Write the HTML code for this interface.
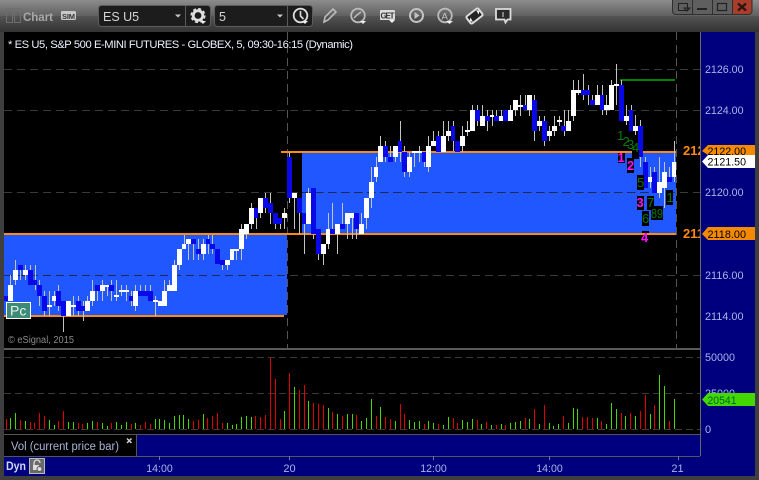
<!DOCTYPE html>
<html><head><meta charset="utf-8"><style>
html,body{margin:0;padding:0;background:#3c3c3c;width:759px;height:480px;overflow:hidden}
svg{display:block;position:absolute;left:0;top:0}
text{font-family:"Liberation Sans",sans-serif}
.ax{font-size:11px;fill:#aab4e6}
.tg{font-size:11px;fill:#000}
.g{font-size:13px;fill:#0a7a0a}
.m{font-size:13px;fill:#ff10ff;font-weight:bold}
</style></head><body>
<svg width="759" height="480" viewBox="0 0 759 480">
<defs>
<linearGradient id="t1" x1="0" y1="0" x2="0" y2="1"><stop offset="0" stop-color="#8c8c8c"/><stop offset="1" stop-color="#606060"/></linearGradient>
<linearGradient id="t2" x1="0" y1="0" x2="0" y2="1"><stop offset="0" stop-color="#545454"/><stop offset="1" stop-color="#333"/></linearGradient>
</defs>
<rect width="759" height="480" fill="#3e3e3e"/>
<rect width="759" height="16" fill="url(#t1)"/>
<rect y="16" width="759" height="16" fill="url(#t2)"/>
<!-- main black -->
<rect x="4" y="32" width="696" height="316" fill="#000"/>
<rect x="4" y="350" width="696" height="84" fill="#000"/>
<!-- bands -->
<rect x="4" y="235" width="283" height="80" fill="#2157ff"/>
<rect x="302" y="153" width="374" height="80" fill="#2157ff"/>
<!-- grid -->
<path d="M4 69.5H700M4 110.5H700M4 192.5H700M4 275.5H700" stroke="#3a3a3a" stroke-dasharray="8 5" fill="none"/>
<path d="M4 275.5H287M302 192.5H676" stroke="#1f2a50" stroke-dasharray="8 5" fill="none"/>
<path d="M287.5 32V348M676.5 32V348" stroke="#555" stroke-dasharray="8 5" fill="none"/>
<path d="M4 357.5H700M4 393.5H700M4 429.5H700" stroke="#3a3a3a" stroke-dasharray="7 4" fill="none"/>
<!-- orange lines -->
<rect x="4" y="315" width="280" height="2" fill="#ff8a10"/>
<rect x="4" y="233" width="672" height="2" fill="#ff8a10"/>
<rect x="281" y="151" width="395" height="2" fill="#ff8a10"/>
<rect x="620" y="79" width="55" height="2" fill="#008000"/>
<!-- wicks -->
<path stroke="#c4c4c4" fill="none" d="M10.5 275V301M15.5 260V285M20.5 265V280M25.5 265V280M30.5 265V285M35.5 265V290M39.5 280V306M44.5 291V316M49.5 291V316M54.5 291V306M58.5 285V311M63.5 301V332M68.5 301V316M73.5 296V316M78.5 296V316M83.5 301V321M87.5 296V311M92.5 280V306M97.5 285V301M102.5 280V301M107.5 285V296M111.5 280V301M116.5 280V301M121.5 285V296M126.5 285V301M131.5 291V306M135.5 285V311M140.5 285V296M145.5 285V296M150.5 285V301M155.5 296V316M160.5 301V306M164.5 280V306M169.5 280V291M174.5 260V291M179.5 249V270M184.5 235V249M188.5 239V260M193.5 239V260M198.5 239V260M203.5 239V260M208.5 235V254M212.5 235V254M217.5 249V264M222.5 260V270M227.5 260V270M232.5 249V260M236.5 249V260M241.5 224V260M246.5 224V239M251.5 203V229M256.5 208V229M260.5 198V218M265.5 193V213M270.5 193V224M275.5 213V229M280.5 218V229M284.5 208V229M289.5 152V203M294.5 198V229M299.5 198V234M304.5 224V254M308.5 188V224M313.5 188V239M318.5 229V260M323.5 244V265M328.5 213V249M332.5 203V234M337.5 224V254M342.5 203V229M347.5 224V239M352.5 218V239M356.5 213V239M361.5 213V234M366.5 218V229M371.5 167V208M376.5 157V182M380.5 136V162M385.5 141V162M390.5 146V162M395.5 146V162M400.5 121V162M404.5 146V177M409.5 152V177M414.5 152V167M419.5 146V162M424.5 152V167M428.5 136V172M433.5 131V146M438.5 131V152M443.5 121V152M448.5 121V141M453.5 121V151M457.5 141V152M462.5 126V152M467.5 121V136M472.5 105V131M477.5 105V126M482.5 105V126M487.5 110V131M492.5 110V126M496.5 110V121M501.5 110V121M505.5 110V121M510.5 105V121M515.5 100V116M520.5 95V116M525.5 95V110M529.5 95V116M534.5 95V141M539.5 116V131M544.5 116V146M549.5 126V141M554.5 116V136M559.5 116V126M564.5 110V136M568.5 110V131M573.5 80V121M578.5 80V95M583.5 74V100M588.5 85V105M592.5 95V105M597.5 85V105M602.5 85V115M606.5 95V115M611.5 80V110M616.5 64V105M621.5 80V121M626.5 105V125M631.5 105V131M635.5 115V135M640.5 120V167M645.5 157V188M650.5 167V188M654.5 167V193M659.5 157V198M664.5 162V208M669.5 167V182M674.5 141V182"/>
<!-- white bodies -->
<path fill="#fff" d="M8 285h5v16h-5zM13 270h5v10h-5zM23 270h5v5h-5zM47 305h5v2h-5zM52 296h4v5h-4zM66 301h5v15h-5zM71 305h5v2h-5zM85 301h5v10h-5zM90 291h5v10h-5zM100 285h5v6h-5zM105 285h4v2h-4zM114 295h5v2h-5zM119 290h5v2h-5zM124 290h5v2h-5zM133 291h5v15h-5zM153 300h5v2h-5zM158 301h4v5h-4zM162 291h5v15h-5zM167 285h5v6h-5zM172 265h5v26h-5zM177 249h5v16h-5zM182 244h4v5h-4zM186 239h5v5h-5zM201 244h5v10h-5zM225 260h5v5h-5zM230 249h4v11h-4zM234 249h5v2h-5zM239 229h5v20h-5zM244 224h5v10h-5zM249 208h5v16h-5zM258 198h5v15h-5zM282 213h5v5h-5zM292 193h5v5h-5zM306 193h5v31h-5zM321 244h5v10h-5zM326 229h4v15h-4zM335 224h5v10h-5zM345 213h5v11h-5zM350 213h4v5h-4zM359 224h5v10h-5zM364 198h5v20h-5zM369 182h5v16h-5zM374 167h4v10h-4zM378 146h5v16h-5zM393 146h5v11h-5zM407 157h5v15h-5zM412 151h5v2h-5zM417 151h5v2h-5zM426 146h5v21h-5zM431 141h5v5h-5zM441 136h5v16h-5zM446 131h5v5h-5zM460 136h5v10h-5zM465 130h5v2h-5zM470 110h5v21h-5zM480 116h5v10h-5zM490 115h4v2h-4zM499 116h4v5h-4zM508 110h5v11h-5zM513 100h5v10h-5zM518 105h5v2h-5zM527 95h5v15h-5zM537 121h5v5h-5zM547 131h5v5h-5zM552 126h5v5h-5zM557 120h5v2h-5zM566 121h5v10h-5zM571 90h5v26h-5zM576 90h5v3h-5zM595 95h5v10h-5zM604 105h5v5h-5zM609 85h5v25h-5zM614 84h5v2h-5zM624 116h5v5h-5zM633 126h5v5h-5zM648 177h4v5h-4zM657 182h5v11h-5zM662 172h5v16h-5zM672 162h4v15h-4z"/>
<!-- blue bodies -->
<path fill="#0808e8" d="M4 296h4v5h-4zM18 265h5v5h-5zM28 270h5v15h-5zM33 280h4v5h-4zM37 285h5v11h-5zM42 296h5v15h-5zM56 291h5v15h-5zM61 301h5v15h-5zM76 301h5v10h-5zM81 306h4v5h-4zM95 285h5v6h-5zM109 285h5v6h-5zM129 296h4v5h-4zM138 291h5v5h-5zM143 291h5v5h-5zM148 291h5v10h-5zM191 239h5v5h-5zM196 249h5v5h-5zM206 239h4v5h-4zM210 244h5v5h-5zM215 249h5v15h-5zM220 260h5v5h-5zM254 208h4v10h-4zM263 198h5v10h-5zM268 203h5v10h-5zM273 213h5v11h-5zM278 218h4v6h-4zM287 157h5v41h-5zM297 198h5v15h-5zM302 213h4v11h-4zM311 188h5v46h-5zM316 229h5v25h-5zM330 229h5v5h-5zM340 224h5v5h-5zM354 213h5v16h-5zM383 146h5v11h-5zM388 157h5v5h-5zM398 141h4v11h-4zM402 152h5v20h-5zM422 152h4v10h-4zM436 136h5v16h-5zM451 126h4v15h-4zM455 141h5v11h-5zM475 110h5v11h-5zM485 116h5v5h-5zM494 116h5v5h-5zM503 110h5v11h-5zM523 105h4v5h-4zM532 100h5v31h-5zM542 121h5v20h-5zM561 126h5v5h-5zM581 90h5v5h-5zM586 90h4v5h-4zM590 100h5v5h-5zM600 95h4v15h-4zM619 85h5v36h-5zM629 110h4v21h-4zM638 126h5v31h-5zM643 162h5v26h-5zM652 172h5v21h-5zM667 177h5v5h-5z"/>
<!-- count labels -->
<g fill="#000">
<rect x="618" y="153" width="7" height="10"/><rect x="627" y="158" width="7" height="15"/><rect x="637" y="175" width="7" height="15"/><rect x="637" y="196" width="7" height="14"/><rect x="647" y="196" width="7" height="14"/><rect x="642" y="211" width="7" height="15"/><rect x="651" y="206" width="12" height="14"/><rect x="666" y="190" width="7" height="15"/><rect x="642" y="231" width="7" height="2"/><rect x="632" y="149" width="7" height="10"/>
</g>
<text class="g" x="617" y="140">1</text><text class="g" x="622.5" y="146">2</text><text class="g" x="627" y="149">3</text><text class="g" x="632" y="152">4</text>
<text class="m" x="617.5" y="162">1</text><text class="m" x="627" y="170">2</text>
<text class="g" x="637" y="187">5</text><text class="m" x="636.5" y="207">3</text><text class="g" x="647" y="207">7</text><text class="g" x="642" y="223">6</text><text class="g" x="651" y="218" textLength="12" lengthAdjust="spacingAndGlyphs">89</text><text class="g" x="666.5" y="202">1</text><text class="m" x="641" y="242">4</text>
<text font-size="13" font-weight="bold" fill="#ff8a10" x="683" y="155">2122.00</text>
<text font-size="13" font-weight="bold" fill="#ff8a10" x="683" y="238">2118.00</text>
<!-- pc -->
<rect x="6.5" y="302.5" width="24" height="16" fill="#3e8a78" stroke="#fff"/>
<text x="10" y="315.500" font-size="14" fill="#e8f4e8">Pc</text>
<text x="8" y="343" font-size="10" fill="#8a8a8a" textLength="66" lengthAdjust="spacingAndGlyphs">© eSignal, 2015</text>
<text x="8" y="48" font-size="11.2" fill="#eaf2ff" textLength="345">* ES U5, S&amp;P 500 E-MINI FUTURES - GLOBEX, 5, 09:30-16:15 (Dynamic)</text>
<!-- volume -->
<path stroke="#e00000" fill="none" d="M6.5 419V429M20.5 420V429M30.5 422V429M34.5 423V429M39.5 413V429M44.5 416V429M58.5 421V429M63.5 411V429M78.5 423V429M82.5 424V429M97.5 422V429M111.5 423V429M131.5 424V429M140.5 425V429M145.5 422V429M150.5 424V429M193.5 421V429M198.5 420V429M207.5 418V429M212.5 416V429M217.5 413V429M222.5 423V429M255.5 416V429M260.5 417V429M265.5 415V429M270.5 358V429M275.5 379V429M280.5 419V429M289.5 373V429M299.5 390V429M304.5 385V429M313.5 403V429M318.5 404V429M323.5 405V429M332.5 412V429M342.5 416V429M356.5 415V429M376.5 416V429M385.5 417V429M390.5 419V429M400.5 404V429M404.5 414V429M424.5 424V429M438.5 424V429M453.5 418V429M457.5 423V429M477.5 420V429M486.5 422V429M496.5 425V429M505.5 425V429M525.5 418V429M534.5 409V429M544.5 405V429M563.5 416V429M582.5 417V429M587.5 417V429M592.5 418V429M601.5 421V429M621.5 413V429M630.5 413V429M640.5 411V429M645.5 395V429M654.5 405V429M669.5 421V429"/>
<path stroke="#42d800" fill="none" d="M10.5 418V429M15.5 413V429M25.5 421V429M49.5 420V429M54.5 425V429M68.5 422V429M73.5 422V429M87.5 423V429M92.5 421V429M102.5 423V429M107.5 426V429M116.5 422V429M121.5 425V429M126.5 422V429M135.5 423V429M155.5 419V429M159.5 419V429M164.5 420V429M169.5 423V429M174.5 416V429M179.5 415V429M183.5 415V429M188.5 419V429M203.5 414V429M227.5 423V429M232.5 425V429M236.5 424V429M241.5 417V429M246.5 416V429M251.5 417V429M284.5 411V429M294.5 387V429M308.5 401V429M328.5 408V429M337.5 414V429M347.5 414V429M352.5 414V429M361.5 421V429M366.5 418V429M371.5 399V429M380.5 407V429M395.5 421V429M409.5 420V429M414.5 422V429M419.5 421V429M428.5 421V429M433.5 423V429M443.5 425V429M448.5 417V429M462.5 420V429M467.5 422V429M472.5 419V429M481.5 424V429M491.5 425V429M501.5 424V429M510.5 423V429M515.5 422V429M520.5 421V429M529.5 419V429M539.5 424V429M549.5 423V429M553.5 426V429M558.5 424V429M568.5 423V429M573.5 408V429M577.5 409V429M597.5 418V429M606.5 424V429M611.5 403V429M616.5 409V429M625.5 416V429M635.5 416V429M650.5 414V429M659.5 375V429M664.5 386V429M674.5 399V429"/>
<!-- panel dividers -->
<rect x="4" y="348" width="696" height="2" fill="#5a5a5a"/>
<path d="M287.5 345V348M676.5 345V348" stroke="#555"/>
<!-- vol legend row -->
<rect x="4" y="434" width="696" height="1" fill="#555"/>
<rect x="4" y="435" width="132" height="21" fill="#000"/>
<rect x="136" y="434" width="564" height="22" fill="#00007f"/>
<rect x="136" y="434" width="1" height="22" fill="#555"/>
<rect x="136" y="434" width="564" height="1" fill="#555"/>
<text x="11" y="450" font-size="11.5" fill="#aab4d8" textLength="108" lengthAdjust="spacingAndGlyphs">Vol (current price bar)</text>
<path d="M127 438.500l4.500 4.500M131.500 438.500l-4.500 4.500" stroke="#d0d0d0" stroke-width="1.500"/>
<!-- time axis -->
<rect x="4" y="456" width="751" height="20" fill="#00007f"/>
<rect x="4" y="456" width="696" height="1" fill="#555"/>
<path d="M159.5 456V460M289.5 456V460M433.5 456V460M549.5 456V460M678.5 456V460" stroke="#7078b0"/>
<text x="6" y="470" font-size="12" font-weight="bold" fill="#d0d8f8" textLength="20" lengthAdjust="spacingAndGlyphs">Dyn</text>
<rect x="29.5" y="458.5" width="15" height="15" fill="#6a6a6a" stroke="#bbb"/>
<path d="M34 465v-2a3 3 0 0 1 6 0" fill="none" stroke="#ddd" stroke-width="1.3"/><rect x="33" y="465" width="6" height="5" fill="#ddd"/><circle cx="39.5" cy="469" r="2.5" fill="#ddd" stroke="#555"/>
<g text-anchor="middle">
<text class="ax" x="159.5" y="472" textLength="26.500" lengthAdjust="spacingAndGlyphs">14:00</text><text class="ax" x="289.5" y="472">20</text><text class="ax" x="433.5" y="472" textLength="26.500" lengthAdjust="spacingAndGlyphs">12:00</text><text class="ax" x="549.5" y="472" textLength="26.500" lengthAdjust="spacingAndGlyphs">14:00</text><text class="ax" x="677.5" y="472">21</text>
</g>
<!-- price axis -->
<rect x="701" y="32" width="54" height="444" fill="#00007f"/>
<rect x="700" y="32" width="1" height="424" fill="#666"/>
<g>
<text class="ax" x="705" y="73" textLength="38.500" lengthAdjust="spacingAndGlyphs">2126.00</text><text class="ax" x="705" y="114" textLength="38.500" lengthAdjust="spacingAndGlyphs">2124.00</text><text class="ax" x="705" y="196" textLength="38.500" lengthAdjust="spacingAndGlyphs">2120.00</text><text class="ax" x="705" y="279" textLength="38.500" lengthAdjust="spacingAndGlyphs">2116.00</text><text class="ax" x="705" y="320" textLength="38.500" lengthAdjust="spacingAndGlyphs">2114.00</text>
<text class="ax" x="705" y="361" textLength="30" lengthAdjust="spacingAndGlyphs">50000</text><text class="ax" x="705" y="397" textLength="30" lengthAdjust="spacingAndGlyphs">25000</text><text class="ax" x="705" y="433">0</text>
</g>
<path d="M702 151l6-6h47v10h-47z" fill="#f58a00"/>
<path d="M702 234l6-7h47v13h-47z" fill="#f58a00"/>
<path d="M702 161.500l6-6.500h47v13h-47z" fill="#fff"/>
<path d="M702 399.500l6-6.500h47v13h-47z" fill="#42d800"/>
<text class="tg" x="707.500" y="155" textLength="38.500" lengthAdjust="spacingAndGlyphs">2122.00</text>
<text class="tg" x="707.500" y="165.500" textLength="38.500" lengthAdjust="spacingAndGlyphs">2121.50</text>
<text class="tg" x="707.500" y="238" textLength="38.500" lengthAdjust="spacingAndGlyphs">2118.00</text>
<text class="tg" x="707.500" y="404" textLength="29" lengthAdjust="spacingAndGlyphs" style="fill:#063">20541</text>
<!-- toolbar -->
<rect x="6.500" y="8.500" width="6" height="14" fill="none" stroke="#6e6e6e"/><rect x="14.500" y="8.500" width="6" height="14" fill="none" stroke="#6e6e6e"/>
<text x="23" y="21" font-size="12" font-weight="bold" fill="#a8a8a8" textLength="30" lengthAdjust="spacingAndGlyphs">Chart</text>
<rect x="61" y="11" width="15" height="9" rx="1.500" fill="#c8c8c8"/>
<text x="62" y="19" font-size="7.500" font-weight="bold" fill="#333" textLength="13">SIM</text>
<rect x="98.500" y="5.500" width="112" height="21" rx="3" fill="#1c1c1c" stroke="#5c5c5c"/>
<rect x="214.500" y="5.500" width="98" height="21" rx="3" fill="#1c1c1c" stroke="#5c5c5c"/>
<path d="M185.500 6V26M287.500 6V26" stroke="#5c5c5c"/>
<text x="103" y="21" font-size="12.500" fill="#d4d4d4">ES U5</text>
<text x="219" y="21" font-size="12.500" fill="#d4d4d4">5</text>
<path d="M175 14.500h6l-3 3zM277 14.500h6l-3 3z" fill="#c8c8c8"/>
<!-- gear -->
<circle cx="198" cy="15.500" r="4.800" fill="none" stroke="#ddd" stroke-width="2.800"/>
<circle cx="198" cy="15.500" r="6.800" fill="none" stroke="#ddd" stroke-width="1.600" stroke-dasharray="3 2.340"/>
<path d="M200 21h6l-3 3z" fill="#eee"/>
<!-- clock -->
<circle cx="300.500" cy="15.500" r="6.800" fill="none" stroke="#ddd" stroke-width="1.800"/><path d="M300.500 11v5l3 3" fill="none" stroke="#ddd" stroke-width="1.600"/>
<path d="M302 21h6l-3 3z" fill="#eee"/>
<!-- pencil -->
<path d="M324 22l1-5 8-8 3 3-8 8z" fill="none" stroke="#bbb" stroke-width="1.600"/>
<!-- gauge -->
<circle cx="358" cy="15.500" r="6.800" fill="none" stroke="#bbb" stroke-width="1.800"/><path d="M354 18l3-3 4-3" fill="none" stroke="#bbb" stroke-width="1.500"/><path d="M360 21h6l-3 3z" fill="#eee"/>
<!-- GET -->
<rect x="380" y="10" width="15" height="10" rx="1" fill="#ddd"/>
<text x="380.500" y="18.500" font-size="8" font-weight="bold" fill="#333" textLength="14">GET</text>
<path d="M389 20h6l-3 3z" fill="#eee"/>
<!-- play -->
<circle cx="416.500" cy="15.500" r="6.500" fill="none" stroke="#c4c4c4" stroke-width="2"/><path d="M414.500 12v7l5-3.500z" fill="#c4c4c4"/>
<!-- A -->
<circle cx="445" cy="15.500" r="6.800" fill="none" stroke="#bbb" stroke-width="1.800"/>
<text x="441.500" y="19.500" font-size="9.500" fill="#ccc">A</text>
<path d="M446 21h7l-3.500 3z" fill="#eee"/>
<!-- diamond -->
<rect x="467" y="11.500" width="15" height="9" rx="1.500" transform="rotate(-38 474.500 16)" fill="#222" stroke="#ddd" stroke-width="2"/>
<path d="M476 10l3.500 1-1 3.500zM473 22l-3.500-1 1-3.500z" fill="#eee"/>
<!-- bubble -->
<path d="M496 9h14.500v10.500h-3l-2 3-1-3h-8.500z" fill="#2a2a2a" stroke="#ddd" stroke-width="1.800"/><path d="M503 12v5" stroke="#ddd"/>
<!-- window buttons -->
<path d="M672 0h80v11a3.500 3.500 0 0 1-3.500 3.500h-73a3.500 3.500 0 0 1-3.500-3.500z" fill="#5f5f5f"/>
<path d="M732 0h20v11a3.500 3.500 0 0 1-3.500 3.500H732z" fill="#a93c2a"/>
<path d="M672.500 0v11a3.500 3.500 0 0 0 3.500 3.500h73a3.500 3.500 0 0 0 3-3.500V0M692.500 0v14M712.500 0v14M732.500 0v14" fill="none" stroke="#2e2e2e"/>
<path d="M678.500 3.500h9v7h-9zM684 8h6l-3 3z" fill="none" stroke="#222" stroke-width="1.100"/>
<rect x="697" y="8" width="10" height="2" fill="#222"/>
<rect x="717.500" y="3.500" width="9" height="7" fill="none" stroke="#222" stroke-width="1.200"/>
<path d="M738 3.500l8 7M746 3.500l-8 7" stroke="#2a1410" stroke-width="2.200"/>
</svg>
</body></html>
